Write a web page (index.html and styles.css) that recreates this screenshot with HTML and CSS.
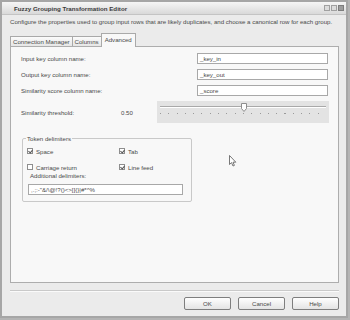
FILE: index.html
```html
<!DOCTYPE html>
<html lang="en">
<head>
    <meta charset="UTF-8">
    <title>Fuzzy Grouping Transformation Editor</title>
    <link rel="stylesheet" href="styles.css">
</head>
<body>

<div class="window">
    <div class="titlebar">
        <span class="title">Fuzzy Grouping Transformation Editor</span>
        <div class="win-buttons">
            <span class="wb"></span>
            <span class="wb"></span>
            <span class="wb close"></span>
        </div>
    </div>

    <div class="content">
        <p class="desc">Configure the properties used to group input rows that are likely duplicates, and choose a canonical row for each group.</p>

        <div class="tabs">
            <div class="tab">Connection Manager</div>
            <div class="tab">Columns</div>
            <div class="tab active">Advanced</div>
        </div>

        <div class="panel">
            <div class="field">
                <span class="label">Input key column name:</span>
                <div class="textbox">_key_in</div>
            </div>
            <div class="field">
                <span class="label">Output key column name:</span>
                <div class="textbox">_key_out</div>
            </div>
            <div class="field">
                <span class="label">Similarity score column name:</span>
                <div class="textbox">_score</div>
            </div>

            <div class="threshold">
                <span class="th-label">Similarity threshold:</span>
                <span class="th-value">0.50</span>
                <div class="slider">
                    <div class="track"></div>
                    <div class="ticks"></div>
                    <!-- thumb sits over the track -->
                    <svg class="thumb" width="6" height="9" viewBox="0 0 6 9">
                        <path d="M0.5 0.5 H5.5 V5.5 L3 8.5 L0.5 5.5 Z" fill="#fdfdfd" stroke="#8c8c8c"/>
                    </svg>
                </div>
            </div>

            <div class="group">
                <span class="legend">Token delimiters</span>
                <div class="checks">
                    <label class="check"><span class="box on"></span>Space</label>
                    <label class="check"><span class="box on"></span>Tab</label>
                    <label class="check"><span class="box"></span>Carriage return</label>
                    <label class="check"><span class="box on"></span>Line feed</label>
                </div>
                <div class="addl">Additional delimiters:</div>
                <div class="textbox delims">,.;:-"&amp;/\@!?()&lt;&gt;[]{}|#*^%</div>
            </div>

            <svg class="cursor" width="8" height="12" viewBox="0 0 8 12">
                <path d="M0.5 0.5 V9.5 L2.5 7.6 L4 11 L5.4 10.4 L4 7.2 H6.8 Z" fill="#fff" stroke="#555" stroke-width="0.8"/>
            </svg>
        </div>

        <div class="separator"></div>

        <div class="buttons">
            <div class="btn">OK</div>
            <div class="btn">Cancel</div>
            <div class="btn">Help</div>
        </div>
    </div>
</div>

</body>
</html>
```

FILE: styles.css
```css
* {
    margin: 0;
    padding: 0;
    box-sizing: border-box;
}

html, body {
    width: 100%;
    height: 100%;
    overflow: hidden;
    background-color: #b4b4b4;
    font-family: "Liberation Sans", Arial, sans-serif;
    font-size: 6.1px;
    color: #4a4a4a;
}

.window {
    width: 348px;
    height: 318px;
    border: 2px solid #a6a6a6;
    background-color: #ebebeb;
    display: flex;
    flex-direction: column;
}

.titlebar {
    height: 13px;
    display: flex;
    align-items: center;
    padding-left: 12px;
    background: linear-gradient(#f6f6f6, #d9d9d9);
    border-bottom: 1px solid #c4c4c4;
}

.title {
    font-weight: bold;
    font-size: 6.2px;
    color: #3a3a3a;
    flex: 1;
}

.win-buttons {
    display: flex;
    gap: 1px;
    margin-right: 2px;
}

.wb {
    width: 6px;
    height: 6px;
    border: 1px solid #a0a0a0;
    background: #dcdcdc;
}

.wb.close {
    background: #9d9d9d;
    border-color: #7d7d7d;
}

.content {
    flex: 1;
    display: flex;
    flex-direction: column;
    padding: 0 7px 0 8px;
}

.desc {
    margin-top: 1px;
    height: 11px;
    line-height: 11px;
    white-space: nowrap;
}

/* tab strip */
.tabs {
    margin-top: 6px;
    height: 13px;
    display: flex;
    align-items: flex-end;
    position: relative;
    z-index: 1;
}

.tab {
    height: 10px;
    line-height: 9px;
    padding: 0 2px;
    border: 1px solid #a9a9a9;
    border-bottom: none;
    background: linear-gradient(#fbfbfb, #e6e6e6);
    margin-right: -1px;
}

.tab.active {
    height: 14px;
    line-height: 12px;
    padding: 0 3px;
    margin-bottom: -1px;
    background: #f8f8f8;
}

.panel {
    height: 237px;
    border: 1px solid #adadad;
    background: #f8f8f8;
    padding: 6px 10px 0 10px;
    position: relative;
}

.field {
    display: flex;
    align-items: center;
    height: 11px;
    margin-bottom: 5px;
}

.label {
    flex: 1;
}

.textbox {
    width: 131px;
    height: 11px;
    line-height: 9px;
    padding-left: 2px;
    background: #fff;
    border: 1px solid #a8a8a8;
    white-space: nowrap;
    overflow: hidden;
}

.threshold {
    margin-top: 5px;
    height: 22px;
    display: flex;
    align-items: center;
}

.th-label {
    width: 100px;
}

.th-value {
    width: 35px;
}

.slider {
    margin-left: auto;
    margin-right: -1px;
    width: 172px;
    height: 22px;
    background: #e3e3e3;
    position: relative;
    padding: 5px 3px 0 3px;
}

.track {
    height: 2px;
    border-top: 1px solid #a9a9a9;
    border-bottom: 1px solid #fff;
}

.ticks {
    margin-top: 5px;
    height: 1px;
    background: repeating-linear-gradient(90deg, #9a9a9a 0 1px, transparent 1px 8.3px);
}

.thumb {
    position: absolute;
    left: 84px;
    top: 2px;
}

/* token delimiters group */
.group {
    margin-top: 15px;
    margin-left: 1px;
    width: 170px;
    height: 64px;
    border: 1px solid #c9c9c9;
    border-radius: 2px;
    position: relative;
    padding: 8px 0 0 4px;
}

.legend {
    position: absolute;
    top: -4px;
    left: 3px;
    padding: 0 1px;
    background: #f8f8f8;
    line-height: 7px;
}

.checks {
    display: grid;
    grid-template-columns: 92px 1fr;
    row-gap: 8px;
}

.check {
    display: flex;
    align-items: center;
    height: 8px;
    gap: 3px;
}

.box {
    width: 6px;
    height: 6px;
    border: 1px solid #8e8e8e;
    background: #fff;
    position: relative;
}

.box.on::after {
    content: "";
    position: absolute;
    left: 1px;
    top: 0;
    width: 2px;
    height: 3px;
    border-right: 1px solid #555;
    border-bottom: 1px solid #555;
    transform: rotate(40deg);
}

.addl {
    margin-top: 1px;
    margin-left: 3px;
    height: 8px;
    line-height: 8px;
}

.textbox.delims {
    margin-top: 4px;
    margin-left: 1px;
    width: 155px;
}

.cursor {
    position: absolute;
    left: 218px;
    top: 108px;
}

.separator {
    margin-top: 7px;
    height: 2px;
    border-top: 1px solid #c9c9c9;
    border-bottom: 1px solid #fafafa;
}

.buttons {
    margin-top: 5px;
    display: flex;
    justify-content: flex-end;
    gap: 7px;
}

.btn {
    width: 47px;
    height: 13px;
    line-height: 11px;
    text-align: center;
    border: 1px solid #7e7e7e;
    border-radius: 2px;
    background: linear-gradient(#fefefe, #e4e4e4);
}
```
